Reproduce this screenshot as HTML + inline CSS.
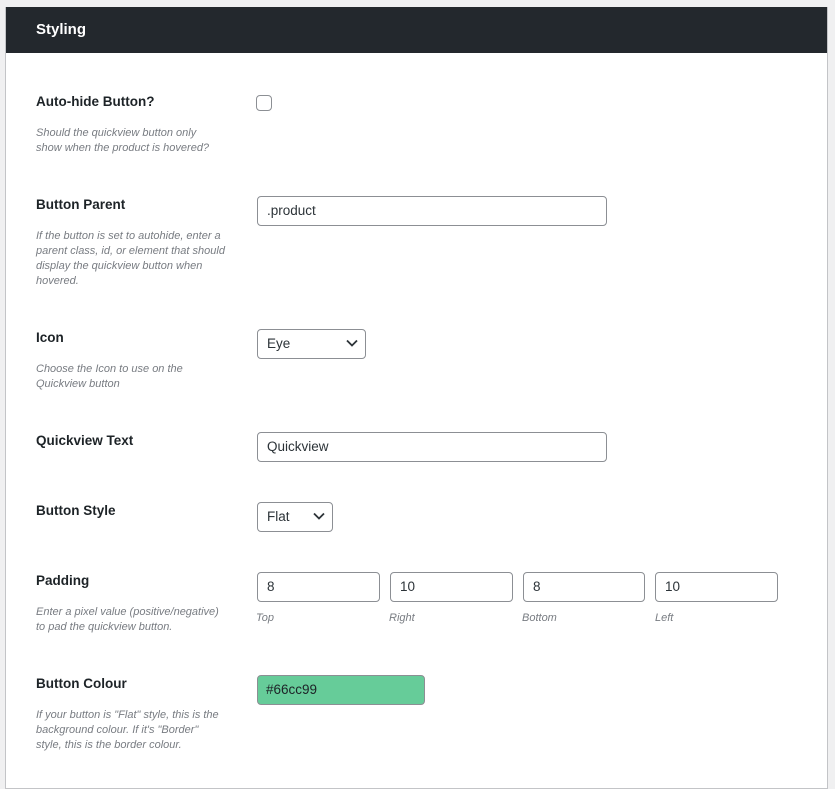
<!DOCTYPE html>
<html><head><style>
body{margin:0;width:835px;height:768px;background:#f0f0f1;position:relative;overflow:hidden;font-family:"Liberation Sans",sans-serif;}
.panel{position:absolute;left:5px;top:7px;width:821px;height:780px;background:#fff;border:1px solid #c3c4c7;}
.hd{position:absolute;left:6px;top:7px;width:821px;height:46px;background:#23282d;}
.hd span{position:absolute;left:30px;top:14px;color:#fff;font-weight:bold;font-size:15px;}
.l{position:absolute;left:36px;font-size:13.5px;font-weight:bold;color:#1d2327;}
.d{position:absolute;left:36px;font-size:11px;font-style:italic;color:#787c82;line-height:15px;width:210px;}
.i{position:absolute;box-sizing:border-box;border:1px solid #8c8f94;border-radius:4px;background:#fff;font-size:13.5px;color:#2c3338;padding:0 9px;line-height:27px;height:30px;}
.s{position:absolute;font-size:11px;font-style:italic;color:#787c82;top:612px;}
.chev{position:absolute;right:7px;top:9px;}
</style></head><body>
<div class="panel"></div>
<div class="hd"><span>Styling</span></div>

<div class="l" style="top:94px">Auto-hide Button?</div>
<div style="position:absolute;left:256px;top:95px;width:14px;height:14px;border:1px solid #8c8f94;border-radius:4px;background:#fff"></div>
<div class="d" style="top:126px">Should the quickview button only<br>show when the product is hovered?</div>

<div class="l" style="top:197px">Button Parent</div>
<div class="i" style="left:257px;top:196px;width:350px">.product</div>
<div class="d" style="top:229px">If the button is set to autohide, enter a<br>parent class, id, or element that should<br>display the quickview button when<br>hovered.</div>

<div class="l" style="top:330px">Icon</div>
<div class="i" style="left:257px;top:329px;width:109px">Eye<svg class="chev" width="12" height="8" viewBox="0 0 12 8"><path d="M1 1.5l5 5 5-5" fill="none" stroke="#2c3338" stroke-width="1.8"/></svg></div>
<div class="d" style="top:362px">Choose the Icon to use on the<br>Quickview button</div>

<div class="l" style="top:433px">Quickview Text</div>
<div class="i" style="left:257px;top:432px;width:350px">Quickview</div>

<div class="l" style="top:503px">Button Style</div>
<div class="i" style="left:257px;top:502px;width:76px">Flat<svg class="chev" width="12" height="8" viewBox="0 0 12 8"><path d="M1 1.5l5 5 5-5" fill="none" stroke="#2c3338" stroke-width="1.8"/></svg></div>

<div class="l" style="top:573px">Padding</div>
<div class="i" style="left:257px;top:572px;width:123px">8</div>
<div class="i" style="left:390px;top:572px;width:123px">10</div>
<div class="i" style="left:523px;top:572px;width:122px">8</div>
<div class="i" style="left:655px;top:572px;width:123px">10</div>
<div class="s" style="left:256px">Top</div>
<div class="s" style="left:389px">Right</div>
<div class="s" style="left:522px">Bottom</div>
<div class="s" style="left:655px">Left</div>
<div class="d" style="top:605px">Enter a pixel value (positive/negative)<br>to pad the quickview button.</div>

<div class="l" style="top:676px">Button Colour</div>
<div class="i" style="left:257px;top:675px;width:168px;background:#66cc99;color:#1d2327;padding-left:8px">#66cc99</div>
<div class="d" style="top:708px">If your button is "Flat" style, this is the<br>background colour. If it's "Border"<br>style, this is the border colour.</div>
</body></html>
